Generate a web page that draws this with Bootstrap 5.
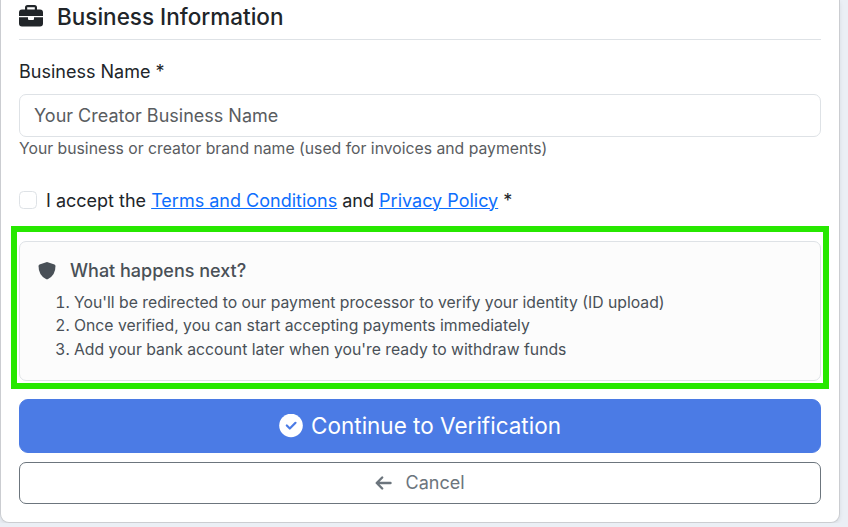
<!DOCTYPE html>
<html lang="en">
<head>
<meta charset="utf-8">
<meta name="viewport" content="width=device-width, initial-scale=1">
<title>Business Information</title>
<link rel="stylesheet" href="https://cdn.jsdelivr.net/npm/bootstrap@5.3.0/dist/css/bootstrap.min.css">
<style>
html { font-size: 18px; }
body { font-family: Inter, "Liberation Sans", sans-serif; color: #212529; background: #ebeff5; }
.page { padding-right: 8px; }
.form-panel { padding: 0 18px 18px; border: 1px solid #cbcdd1; border-top: 0; border-radius: 0 0 9px 9px; box-shadow: 0 2px 4px rgba(0,0,0,.08); }
.section-title { line-height: 28px; padding: 3px 0 8px; margin-bottom: 18px; gap: 14px; border-bottom: 1px solid #dee2e6; }
.form-label { margin-bottom: 9px; }
.form-control { line-height: 27px; padding: 7px 14px; border-color: #dee2e6; border-radius: 7px; }
.form-control::placeholder { color: #595c5f; }
.hint { color: #595c5f; }
.agree { margin: 26px 0 27px; gap: 9px; }
.agree .form-check-input { width: 18px; height: 18px; border-color: #dee2e6; }
.agree a { color: #0d6efd; }
.callout { position: relative; margin-bottom: 18px; }
.callout::after { content: ""; position: absolute; inset: -15px -8px -8px; border: 6px solid #27e800; pointer-events: none; }
.info-box { padding: 18px; color: #495057; background: #fcfcfc; border: 1px solid #dee2e6; border-radius: 7px; }
.info-title { font-size: 18px; line-height: 22px; margin-bottom: 9px; gap: 14px; }
.steps { padding-left: 36px; margin-bottom: 0; }
.btn-verify { line-height: 34px; padding: 9px 18px; gap: 8px; color: #fff; background: #4b7be5; border: 1px solid #4b7be5; border-radius: 9px; margin-bottom: 9px; }
.btn-verify:hover { color: #fff; background: #3e6bd0; }
.btn-back { line-height: 26px; padding: 7px 14px; gap: 13px; border-radius: 7px; }
</style>
</head>
<body>
<main class="page">
  <form class="form-panel bg-white">
    <h2 class="section-title fs-5 d-flex align-items-center">
      <svg width="24" height="24" viewBox="0 0 24 24" aria-hidden="true"><path fill="currentColor" d="M6 4.500V2.500Q6 0 8.500 0h7Q18 0 18 2.500v2h3q3 0 3 3V11H0V7.500q0-3 3-3zm2.200 0h7.600V2.200H8.200zM0 12.200h9V14q0 1 1 1h4q1 0 1-1v-1.800h9V18.500q0 3-3 3H3q-3 0-3-3z"/></svg>
      <span>Business Information</span>
    </h2>
    <label class="form-label d-block" for="business-name">Business Name *</label>
    <input class="form-control" type="text" id="business-name" placeholder="Your Creator Business Name" aria-describedby="business-hint">
    <div class="hint small" id="business-hint">Your business or creator brand name (used for invoices and payments)</div>
    <div class="agree d-flex align-items-center">
      <input class="form-check-input flex-shrink-0 m-0" type="checkbox" id="accept">
      <label for="accept">I accept the <a href="#terms">Terms and Conditions</a> and <a href="#privacy">Privacy Policy</a> *</label>
    </div>
    <div class="callout">
      <section class="info-box">
        <h3 class="info-title d-flex align-items-center">
          <svg width="18" height="18" viewBox="0 0 18 18" aria-hidden="true"><path fill="currentColor" d="M9 0 16.500 2.500Q17.500 3 17.500 4 17.500 13.500 9.700 17.200 9 17.500 8.300 17.200.5 13.500 .5 4 .5 3 1.500 2.500z"/></svg>
          <span>What happens next?</span>
        </h3>
        <ol class="steps small">
          <li>You'll be redirected to our payment processor to verify your identity (ID upload)</li>
          <li>Once verified, you can start accepting payments immediately</li>
          <li>Add your bank account later when you're ready to withdraw funds</li>
        </ol>
      </section>
    </div>
    <button class="btn btn-lg btn-verify w-100 d-flex align-items-center justify-content-center" type="submit">
      <svg width="24" height="24" viewBox="0 0 24 24" aria-hidden="true"><circle cx="12" cy="11.500" r="11.800" fill="#fff"/><path d="m7.800 11.500 3 3 5.700-5.700" fill="none" stroke="#4b7be5" stroke-width="2.200" stroke-linecap="round" stroke-linejoin="round"/></svg>
      <span>Continue to Verification</span>
    </button>
    <button class="btn btn-outline-secondary btn-back w-100 d-flex align-items-center justify-content-center" type="button">
      <svg width="17" height="16" viewBox="0 0 17 16" aria-hidden="true"><path d="M15.500 8H2M7.200 2.500 1.700 8l5.500 5.500" fill="none" stroke="currentColor" stroke-width="2.400" stroke-linecap="round" stroke-linejoin="round"/></svg>
      <span>Cancel</span>
    </button>
  </form>
</main>
<script src="https://cdn.jsdelivr.net/npm/bootstrap@5.3.0/dist/js/bootstrap.bundle.min.js"></script>
</body>
</html>
